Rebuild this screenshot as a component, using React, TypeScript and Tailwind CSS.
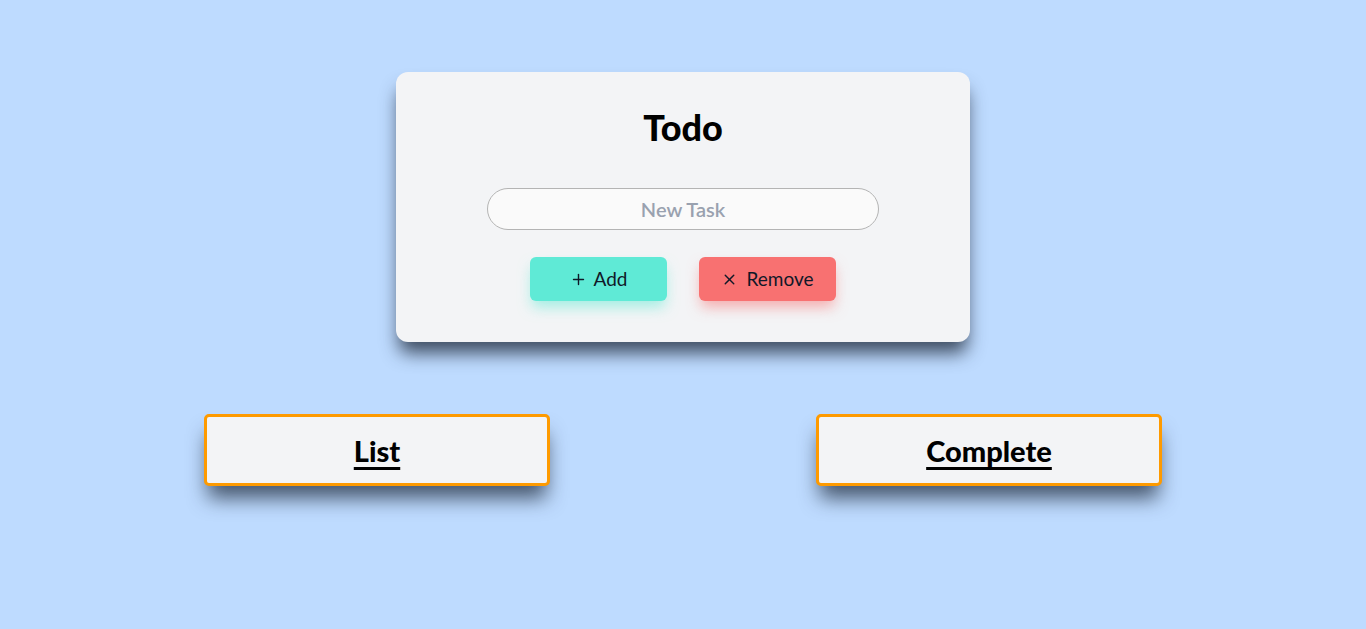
import { Plus, X } from "lucide-react";

const FONT = { fontFamily: "Lato, 'Noto Sans', sans-serif" };

function PanelLink({ label }: { label: string }) {
  return (
    <div className="flex h-[72px] w-[346px] items-center justify-center rounded-[5px] border-[3px] border-amber-500 bg-gray-100 shadow-[0_16px_20px_-4px_rgba(30,41,59,0.75)]">
      <a href="#" className="pt-[2px] text-[29px] font-black text-black underline decoration-[3px] underline-offset-[5px]">
        {label}
      </a>
    </div>
  );
}

export default function App() {
  return (
    <div className="min-h-[629px] bg-blue-200" style={FONT}>
      <div className="flex flex-col items-center pt-[72px]">
        <div className="flex h-[270px] w-[574px] flex-col items-center rounded-xl bg-gray-100 pt-[31px] shadow-[0_14px_18px_-3px_rgba(30,41,59,0.8)]">
          <h1 className="h-[48px] text-[36px] font-black leading-[48px] text-black">Todo</h1>
          <input
            className="mt-[37px] h-[42px] w-[392px] rounded-full border border-[#b4b4b4] bg-[#fafafa] text-center text-[20px] font-semibold text-gray-700 outline-none placeholder:text-gray-400"
            placeholder="New Task"
          />
          <div className="mt-[27px] flex gap-[32px]">
            <button
              type="button"
              className="flex h-[44px] w-[137px] items-center justify-center gap-[7px] rounded-md bg-[#5fead6] text-[19px] text-gray-900 shadow-[0_8px_14px_-2px_rgba(94,234,212,0.55)]"
            >
              <Plus size={17} strokeWidth={2} />
              Add
            </button>
            <button
              type="button"
              className="flex h-[44px] w-[137px] items-center justify-center gap-[8px] rounded-md bg-[#f87171] text-[19px] text-gray-900 shadow-[0_8px_14px_-2px_rgba(248,113,113,0.55)]"
            >
              <X size={17} strokeWidth={2} />
              Remove
            </button>
          </div>
        </div>
      </div>

      <div className="mt-[72px] flex justify-center gap-[266px]">
        <PanelLink label="List" />
        <PanelLink label="Complete" />
      </div>
    </div>
  );
}
